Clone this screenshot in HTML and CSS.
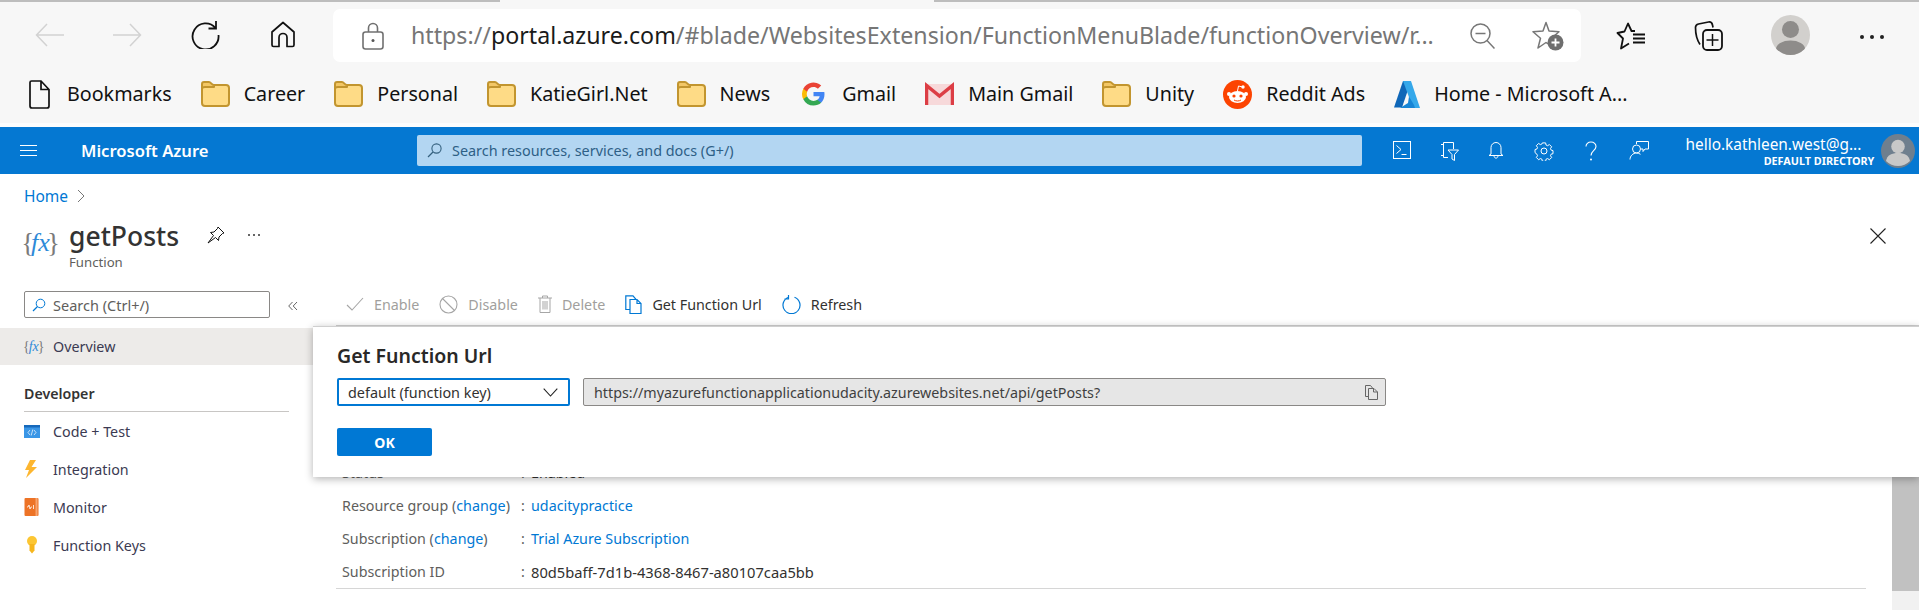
FILE: index.html
```html
<!DOCTYPE html>
<html lang="en">
<head>
    <meta charset="UTF-8">
    <title>getPosts - Microsoft Azure</title>
    <link rel="stylesheet" href="styles.css">
</head>
<body>
    <svg class="defs" width="0" height="0">
        <defs>
            <g id="folder-shape">
                <rect x="1" y="4" width="27" height="21" rx="3" fill="#fedb86" stroke="#c2952f" stroke-width="2"/>
                <path d="M1 8V3a2 2 0 0 1 2-2h5c2 0 2.500 3 5 3v2H4C2 6 1 7 1 8z" fill="#f3c766" stroke="#c2952f" stroke-width="2" stroke-linejoin="round"/>
            </g>
        </defs>
    </svg>

    <div class="browser">
        <div class="tabstrip">
            <span class="tab-shadow left"></span>
            <span class="tab-shadow right"></span>
        </div>
        <div class="toolbar">
            <svg class="back" width="29" height="24" viewBox="0 0 29 24"><path d="M29 12H1.500M12 1 1.500 12 12 23" fill="none" stroke="#d2d2d2" stroke-width="1.500"/></svg>
            <svg class="forward" width="29" height="24" viewBox="0 0 29 24"><path d="M0 12h27.500M17 1l10.500 11L17 23" fill="none" stroke="#d2d2d2" stroke-width="1.500"/></svg>
            <svg class="reload" width="29" height="29" viewBox="0 0 29 29"><path d="M24.500 8A13 13 0 1 0 27.500 15M25 1v7.500h-7.500" fill="none" stroke="#111" stroke-width="1.800"/></svg>
            <svg class="home" width="26" height="27" viewBox="0 0 26 27"><path d="M13 1.500 2 11v13a1.500 1.500 0 0 0 1.500 1.500H9V16.500a4 4 0 0 1 8 0v9h5.500A1.500 1.500 0 0 0 24 24V11z" fill="none" stroke="#111" stroke-width="1.700" stroke-linejoin="round"/></svg>
            <div class="addressbar">
                <svg class="lock" width="22" height="28" viewBox="0 0 22 28"><path d="M6.500 10V6a4.500 4.500 0 0 1 9 0v4" fill="none" stroke="#707070" stroke-width="1.600"/><rect x="1" y="10" width="20" height="17" rx="2.500" fill="none" stroke="#707070" stroke-width="1.600"/><circle cx="11" cy="18.500" r="1.500" fill="#555"/></svg>
                <span class="url"><span class="url-dim">https://</span>portal.azure.com<span class="url-dim">/#blade/WebsitesExtension/FunctionMenuBlade/functionOverview/r...</span></span>
                <svg class="zoom-out" width="25" height="26" viewBox="0 0 25 26"><circle cx="10.500" cy="10.500" r="9.500" fill="none" stroke="#777" stroke-width="1.500"/><path d="M5.500 10.500h10M17 17.500l7.500 8" fill="none" stroke="#777" stroke-width="1.500"/></svg>
                <svg class="star-add" width="32" height="30" viewBox="0 0 32 30"><path d="M14 1.500 17 10l10 .8-7.500 6.400L22 27l-8-5.500L6 27l2.500-9.800L1 10.800 11 10z" fill="none" stroke="#777" stroke-width="1.500" stroke-linejoin="round"/><circle cx="23.500" cy="21.500" r="8" fill="#6e6e6e"/><path d="M23.500 17.500v8M19.500 21.500h8" stroke="#fff" stroke-width="1.800"/></svg>
            </div>
            <svg class="fav" width="30" height="28" viewBox="0 0 30 28"><path d="M19 9h-3.500L12 1.500 8.500 9.500 1.500 11 7 16.500 5 26.500l8-5" fill="none" stroke="#111" stroke-width="1.800" stroke-linejoin="round"/><path d="M17 12.500h12M17 16.500h12M17 20.500h12" stroke="#111" stroke-width="1.800"/></svg>
            <svg class="collections" width="30" height="30" viewBox="0 0 30 30"><path d="M6 23.500C3 19 1.500 13 1.500 6.500c0-2 1-3 3-3.500l10-2c2-.3 3.500.5 4 3l.5 2.500" fill="none" stroke="#111" stroke-width="1.700"/><rect x="9" y="9" width="19" height="20" rx="4" fill="none" stroke="#111" stroke-width="1.800"/><path d="M18.500 13v12M12.500 19h12" stroke="#111" stroke-width="1.500"/></svg>
            <div class="browser-avatar">
                <svg width="39" height="40" viewBox="0 0 39 40"><circle cx="19.500" cy="14.500" r="8.500" fill="#8e8c8a"/><ellipse cx="19.500" cy="34" rx="14.500" ry="8.500" fill="#8e8c8a"/></svg>
            </div>
            <div class="more-dots"><i></i><i></i><i></i></div>
        </div>
        <div class="bookmarks">
            <div class="bookmark doc">
                <svg width="21" height="29" viewBox="0 0 21 29"><path d="M2.500 1H12l8 8.500V26a2 2 0 0 1-2 2H3a2 2 0 0 1-2-2V2.500A1.500 1.500 0 0 1 2.500 1zM12 1v8.500h8" fill="none" stroke="#111" stroke-width="1.700"/></svg>
                <span>Bookmarks</span>
            </div>
            <div class="bookmark"><svg width="29" height="26" viewBox="0 0 29 26"><use href="#folder-shape"/></svg><span>Career</span></div>
            <div class="bookmark"><svg width="29" height="26" viewBox="0 0 29 26"><use href="#folder-shape"/></svg><span>Personal</span></div>
            <div class="bookmark"><svg width="29" height="26" viewBox="0 0 29 26"><use href="#folder-shape"/></svg><span>KatieGirl.Net</span></div>
            <div class="bookmark"><svg width="29" height="26" viewBox="0 0 29 26"><use href="#folder-shape"/></svg><span>News</span></div>
            <div class="bookmark">
                <svg width="29" height="26" viewBox="-2.500 -1 29 26"><path d="M23 12.200c0-.8-.1-1.600-.2-2.300H12v4.400h6.200a5.300 5.300 0 0 1-2.300 3.500v2.900h3.700c2.200-2 3.400-5 3.400-8.500z" fill="#4285f4"/><path d="M12 23.500c3.100 0 5.700-1 7.600-2.800l-3.700-2.900c-1 .7-2.300 1.100-3.900 1.100-3 0-5.500-2-6.400-4.700H1.800v3A11.500 11.500 0 0 0 12 23.500z" fill="#34a853"/><path d="M5.600 14.200a6.900 6.900 0 0 1 0-4.400v-3H1.800a11.500 11.500 0 0 0 0 10.400z" fill="#fbbc05"/><path d="M12 5.100c1.700 0 3.200.6 4.400 1.700l3.300-3.300A11.500 11.500 0 0 0 1.800 6.800l3.800 3C6.500 7.100 9 5.100 12 5.100z" fill="#ea4335"/></svg>
                <span>Gmail</span>
            </div>
            <div class="bookmark">
                <svg width="29" height="26" viewBox="0 0 29 26"><rect y="3" width="29" height="21" fill="#f7d9da"/><path d="M1.500 24V4.500L14.500 15 27.500 4.500V24" fill="none" stroke="#dc3e45" stroke-width="3.500"/></svg>
                <span>Main Gmail</span>
            </div>
            <div class="bookmark"><svg width="29" height="26" viewBox="0 0 29 26"><use href="#folder-shape"/></svg><span>Unity</span></div>
            <div class="bookmark">
                <svg width="29" height="29" viewBox="0 0 29 29"><circle cx="14.500" cy="14.500" r="14.500" fill="#fc4301"/><ellipse cx="14.500" cy="17" rx="8.500" ry="6" fill="#fff"/><circle cx="6" cy="14" r="2" fill="#fff"/><circle cx="23" cy="14" r="2" fill="#fff"/><circle cx="11" cy="16" r="1.600" fill="#fc4301"/><circle cx="18" cy="16" r="1.600" fill="#fc4301"/><path d="M11 20c2 1.300 5 1.300 7 0" fill="none" stroke="#fc4301" stroke-width="1"/><path d="M14.500 11l1-5 4 1" fill="none" stroke="#fff" stroke-width="1"/><circle cx="20" cy="7" r="1.700" fill="#fff"/></svg>
                <span>Reddit Ads</span>
            </div>
            <div class="bookmark">
                <svg width="26" height="29" viewBox="0 0 26 29"><path d="M9 1h8L8 27.500H0z" fill="#0f67b8"/><path d="M17 1H9l10 27h7z" fill="#35a8ea"/><path d="M15 16.500l5 8.500 1 3H6l8-5z" fill="#1685d6"/></svg>
                <span>Home - Microsoft A...</span>
            </div>
        </div>
    </div>

    <header class="topbar">
        <div class="hamburger"><i></i><i></i><i></i></div>
        <div class="brand">Microsoft Azure</div>
        <div class="global-search">
            <svg width="15" height="15" viewBox="0 0 15 15"><circle cx="9.500" cy="5.500" r="4.600" fill="none" stroke="#35617f" stroke-width="1.100"/><path d="M6 9 1 14" stroke="#35617f" stroke-width="1.200"/></svg>
            <span>Search resources, services, and docs (G+/)</span>
        </div>
        <div class="top-icons">
            <div class="top-icon"><svg width="18" height="18" viewBox="0 0 18 18"><rect x=".5" y=".5" width="17" height="17" fill="none" stroke="#fff"/><path d="M3.500 4.500 8 8.500l-4.500 4M8.500 13.500h5" fill="none" stroke="#fff"/></svg></div>
            <div class="top-icon"><svg width="20" height="20" viewBox="0 0 20 20"><path d="M4.500 1.500h10V8M4.500 1.500v15H9M2 3.500h2.500M2 14.500h2.500M9 9h10.500l-4 4.500V19.500L13 18v-4.500z" fill="none" stroke="#fff"/></svg></div>
            <div class="top-icon"><svg width="16" height="19" viewBox="0 0 16 19"><path d="M8 1.500a5 5 0 0 0-5 5V13l-2 1.500h14L13 13V6.500a5 5 0 0 0-5-5zM6 14.500c0 3.500 4 3.500 4 0" fill="none" stroke="#fff"/></svg></div>
            <div class="top-icon"><svg width="20" height="20" viewBox="0 0 20 20"><path d="M8.200 1h3.600l.5 2.400 1.700.7 2-1.300 2.500 2.500-1.300 2 .7 1.700 2.100.6v3.400l-2.100.5-.7 1.700 1.300 2-2.500 2.500-2-1.300-1.700.7-.5 2.400H8.200l-.5-2.400-1.700-.7-2 1.300-2.500-2.500 1.300-2-.7-1.700L0 11.800V8.400l2.100-.6.700-1.700-1.300-2L4 1.600l2 1.300 1.700-.7z" transform="translate(1 1) scale(.9)" fill="none" stroke="#fff" stroke-width="1.100"/><circle cx="10" cy="10" r="3" fill="none" stroke="#fff"/></svg></div>
            <div class="top-icon"><svg width="12" height="20" viewBox="0 0 12 20"><path d="M1 5.500C1 3 3 1 6 1s5 2 5 4.500c0 4-5 4.500-5 9" fill="none" stroke="#fff" stroke-width="1.100"/><circle cx="6" cy="18.500" r="1" fill="#fff"/></svg></div>
            <div class="top-icon"><svg width="20" height="19" viewBox="0 0 20 19"><circle cx="7.500" cy="8" r="4" fill="none" stroke="#fff"/><path d="M1 18.500c0-3.500 3-6.500 6.500-6.500 1.500 0 3 .5 4 1.300M7.500 3V.5h12V8H16l-2 2.500V8h-2" fill="none" stroke="#fff"/></svg></div>
        </div>
        <div class="account">
            <div class="account-name">hello.kathleen.west@g...</div>
            <div class="account-dir">DEFAULT DIRECTORY</div>
        </div>
        <svg class="account-pic" width="34" height="34" viewBox="0 0 34 34"><circle cx="17" cy="17" r="17" fill="#6f7f8e"/><circle cx="17" cy="12.500" r="6.800" fill="#c8c8c8"/><path d="M5 27c1-6 6-8 12-8s11 2 12 8a17 17 0 0 1-24 0z" fill="#c8c8c8"/></svg>
    </header>

    <div class="crumbs">
        <a href="#">Home</a>
        <svg width="8" height="14" viewBox="0 0 8 14"><path d="M1 1l6 6-6 6" fill="none" stroke="#777"/></svg>
    </div>

    <div class="title-row">
        <div class="fx-big"><span class="brace">{</span><span class="fx">fx</span><span class="brace">}</span></div>
        <div class="title-text">
            <h1>getPosts</h1>
            <div class="subtitle">Function</div>
        </div>
        <svg class="pin" width="18" height="18" viewBox="0 0 18 18"><path d="M11 1l6 6-1.500.5L12 11l-.5 3.500-3-3L1 17l5.500-7.500-3-3L7 6l3.500-3.500z" fill="none" stroke="#111" stroke-linejoin="round"/></svg>
        <div class="title-dots"><i></i><i></i><i></i></div>
        <svg class="close" width="16" height="16" viewBox="0 0 16 16"><path d="M.5.500l15 15M15.500.5l-15 15" stroke="#222" stroke-width="1.100"/></svg>
    </div>

    <div class="blade">
        <aside class="sidebar">
            <div class="side-search-row">
                <div class="side-search">
                    <svg width="14" height="14" viewBox="0 0 14 14"><circle cx="8.500" cy="5.500" r="4.300" fill="none" stroke="#0078d4"/><path d="M5.500 8.500 1 13" stroke="#0078d4" stroke-width="1.200"/></svg>
                    <span>Search (Ctrl+/)</span>
                </div>
                <svg class="collapse" width="10" height="10" viewBox="0 0 10 10"><path d="M4.500 1 .7 5l3.800 4M9 1 5.200 5 9 9" fill="none" stroke="#666"/></svg>
            </div>
            <div class="side-item active">
                <div class="side-icon fx-small"><span class="brace">{</span><span class="fx">fx</span><span class="brace">}</span></div>
                Overview
            </div>
            <div class="side-group">Developer</div>
            <div class="side-item">
                <div class="side-icon"><svg width="16" height="13" viewBox="0 0 16 13"><rect width="16" height="13" fill="#3a96e6"/><rect width="16" height="2.500" fill="#1669bb"/><path d="M6 5 4 7.500 6 10M10 5l2 2.500L10 10M8.800 4.500 7.200 10.500" fill="none" stroke="#fff" stroke-width=".7"/></svg></div>
                Code + Test
            </div>
            <div class="side-item">
                <div class="side-icon"><svg width="14" height="18" viewBox="0 0 14 18"><path d="M6 0h6L7.500 7H13L2 18l3-8H1z" fill="#fdb62f"/></svg></div>
                Integration
            </div>
            <div class="side-item">
                <div class="side-icon"><svg width="15" height="18" viewBox="0 0 15 18"><rect x=".5" width="14" height="18" rx="1" fill="#ed7326"/><rect x="11.500" width="2" height="18" fill="#f7a46e"/><path d="M3 9h1l1-2 1 4 1-2h1M9.500 7v4" fill="none" stroke="#fff" stroke-width=".8"/></svg></div>
                Monitor
            </div>
            <div class="side-item">
                <div class="side-icon"><svg class="key" width="12" height="18" viewBox="0 0 12 18"><circle cx="6" cy="5" r="5" fill="#fcc633"/><path d="M3.500 8h5v6.500L6 17.500l-2.500-3z" fill="#f6b61d"/></svg></div>
                Function Keys
            </div>
        </aside>

        <main class="content">
            <div class="command-bar">
                <div class="cmd disabled">
                    <svg width="18" height="14" viewBox="0 0 18 14"><path d="M1 8l5 5L17 1" fill="none" stroke="#a6a6a6" stroke-width="1.100"/></svg>
                    Enable
                </div>
                <div class="cmd disabled">
                    <svg width="19" height="19" viewBox="0 0 19 19"><circle cx="9.500" cy="9.500" r="8.500" fill="none" stroke="#a6a6a6" stroke-width="1.100"/><path d="M3.500 3.500l12 12" stroke="#a6a6a6" stroke-width="1.100"/></svg>
                    Disable
                </div>
                <div class="cmd disabled">
                    <svg width="14" height="18" viewBox="0 0 14 18"><path d="M0 3h14M4.500 3V1h5v2M2 3v14.500h10V3M5 6v8.500M7 6v8.500M9 6v8.500" fill="none" stroke="#a6a6a6"/></svg>
                    Delete
                </div>
                <div class="cmd">
                    <svg width="17" height="19" viewBox="0 0 17 19"><path d="M5 14.500H.8V.8H8l3 3.500" fill="none" stroke="#0078d4" stroke-width="1.200"/><path d="M5 4.500h7l4 4v10H5zM12 4.500v4h4" fill="none" stroke="#0078d4" stroke-width="1.200"/></svg>
                    Get Function Url
                </div>
                <div class="cmd">
                    <svg width="19" height="19" viewBox="0 0 19 19"><path d="M12.500 2.200a8.500 8.500 0 1 1-6 0M6.500 0v4H2.500" fill="none" stroke="#0078d4" stroke-width="1.200"/></svg>
                    Refresh
                </div>
            </div>
            <div class="detail-area">
                <div class="details">
                    <div class="detail-row"><div class="detail-label">Status</div><div class="detail-colon">:</div><div>Enabled</div></div>
                    <div class="detail-row"><div class="detail-label">Resource group (<a href="#">change</a>)</div><div class="detail-colon">:</div><a href="#">udacitypractice</a></div>
                    <div class="detail-row"><div class="detail-label">Subscription (<a href="#">change</a>)</div><div class="detail-colon">:</div><a href="#">Trial Azure Subscription</a></div>
                    <div class="detail-row"><div class="detail-label">Subscription ID</div><div class="detail-colon">:</div><div class="detail-id">80d5baff-7d1b-4368-8467-a80107caa5bb</div></div>
                </div>
                <div class="scrollbar"><div class="scroll-thumb"></div></div>
            </div>
        </main>
    </div>

    <div class="url-popup">
        <h2>Get Function Url</h2>
        <div class="url-fields">
            <div class="key-select">
                <span>default (function key)</span>
                <svg width="15" height="9" viewBox="0 0 15 9"><path d="M.7.700 7.500 8 14.300.7" fill="none" stroke="#222" stroke-width="1.100"/></svg>
            </div>
            <div class="url-box">
                <span>https://myazurefunctionapplicationudacity.azurewebsites.net/api/getPosts?</span>
                <svg width="13" height="15" viewBox="0 0 13 15"><path d="M3.500 11.500H.5V.5h5l2 2.500" fill="none" stroke="#666"/><path d="M3.500 3.500h5.500l3.500 3.500v7.500h-9zM8.500 3.500V7h4" fill="none" stroke="#666"/></svg>
            </div>
        </div>
        <button class="ok-btn" type="button">OK</button>
    </div>
</body>
</html>
```

FILE: styles.css
```css
body {
    margin: 0;
    height: 610px;
    overflow: hidden;
    position: relative;
    display: flex;
    flex-direction: column;
    background-color: #ffffff;
    font-family: "Noto Sans", sans-serif;
    color: #333333;
}

a {
    color: #0078d4;
    text-decoration: none;
}

svg {
    display: block;
    flex-shrink: 0;
}

.defs {
    height: 0;
}

/* browser chrome */
.browser {
    height: 127px;
    flex-shrink: 0;
    box-sizing: border-box;
    background-color: #f7f7f7;
    border-bottom: 4px solid #fdfdfd;
}

.tabstrip {
    height: 2px;
    display: flex;
    justify-content: space-between;
}

.tab-shadow {
    height: 2px;
    background-color: #bdbdbd;
}

.tab-shadow.left {
    width: 500px;
}

.tab-shadow.right {
    width: 985px;
}

.toolbar {
    height: 60px;
    padding-top: 7px;
    display: flex;
    align-items: flex-start;
}

.back {
    margin: 14px 0 0 35px;
}

.forward {
    margin: 14px 0 0 49px;
}

.reload {
    margin: 11px 0 0 49px;
}

.home {
    margin: 12px 0 0 50px;
}

.addressbar {
    width: 1248px;
    height: 53px;
    margin-left: 37px;
    display: flex;
    align-items: center;
    border-radius: 7px;
    background-color: #ffffff;
}

.lock {
    margin-left: 29px;
}

.url {
    width: 1059px;
    margin: -2px 0 0 27px;
    font-size: 23.200px;
    color: #1a1a1a;
    white-space: nowrap;
}

.url-dim {
    color: #767676;
}

.star-add {
    margin-left: 37px;
}

.fav {
    margin: 13px 0 0 35px;
}

.collections {
    margin: 12px 0 0 48px;
}

.browser-avatar {
    width: 39px;
    height: 40px;
    margin: 6px 0 0 47px;
    overflow: hidden;
    border-radius: 50%;
    background-color: #d2d0cd;
}

.more-dots {
    margin: 26px 0 0 50px;
    display: flex;
    gap: 6px;
}

.more-dots i {
    width: 4px;
    height: 4px;
    border-radius: 50%;
    background-color: #222222;
}

.bookmarks {
    height: 50px;
    padding-left: 29px;
    display: flex;
    align-items: center;
    gap: 29px;
}

.bookmark {
    display: flex;
    align-items: center;
    gap: 14px;
    font-size: 19.700px;
    color: #111111;
    white-space: nowrap;
}

.bookmark span {
    margin-top: -1px;
}

.bookmark.doc {
    gap: 17px;
}

/* azure header */
.topbar {
    height: 47px;
    flex-shrink: 0;
    display: flex;
    align-items: center;
    background-color: #0578d2;
    color: #ffffff;
}

.hamburger {
    width: 17px;
    margin-left: 20px;
    display: flex;
    flex-direction: column;
    gap: 4px;
}

.hamburger i {
    height: 1px;
    background-color: #ffffff;
}

.brand {
    width: 336px;
    margin-left: 44px;
    font-size: 16.600px;
    font-weight: 600;
}

.global-search {
    width: 945px;
    height: 31px;
    box-sizing: border-box;
    padding-left: 10px;
    display: flex;
    align-items: center;
    gap: 10px;
    border-radius: 2px;
    background-color: #b3d6f2;
    color: #2e5f86;
    font-size: 14.400px;
}

.top-icons {
    margin-left: 16px;
    display: flex;
}

.top-icon {
    width: 47.400px;
    display: flex;
    justify-content: center;
}

.account {
    width: 212px;
    text-align: right;
}

.account-name {
    margin-right: 13px;
    font-size: 15.400px;
    line-height: 19px;
    white-space: nowrap;
}

.account-dir {
    font-size: 10.800px;
    font-weight: 700;
    line-height: 13px;
    white-space: nowrap;
}

.account-pic {
    margin-left: 7px;
}

/* page heading */
.crumbs {
    height: 44px;
    flex-shrink: 0;
    padding-left: 24px;
    display: flex;
    align-items: center;
    gap: 9px;
    font-size: 15.500px;
}

.title-row {
    height: 60px;
    flex-shrink: 0;
    display: flex;
    align-items: flex-start;
}

.fx-big {
    width: 33px;
    margin: 8px 0 0 24px;
    display: flex;
    justify-content: center;
    font-family: "Liberation Serif", serif;
    line-height: 34px;
}

.brace {
    color: #7a7a7a;
    font-weight: 400;
}

.fx {
    color: #2e8ad8;
    font-style: italic;
}

.fx-big .brace {
    margin: 0 -3px;
    font-size: 27px;
}

.fx-big .fx {
    font-size: 26px;
}

.title-text {
    margin-left: 12px;
}

h1 {
    margin: 0;
    font-size: 26.500px;
    font-weight: 500;
    line-height: 36px;
}

.subtitle {
    font-size: 13.200px;
    line-height: 16px;
    color: #605e5c;
}

.pin {
    margin: 8px 0 0 28px;
}

.title-dots {
    margin: 16px 0 0 23px;
    display: flex;
    gap: 3px;
}

.title-dots i {
    width: 2px;
    height: 2px;
    border-radius: 50%;
    background-color: #333333;
}

.close {
    margin: 10px 33px 0 auto;
}

/* blade */
.blade {
    flex: 1;
    display: flex;
    min-height: 0;
}

.sidebar {
    width: 313px;
    flex-shrink: 0;
}

.side-search-row {
    height: 37px;
    padding: 13px 0 0 24px;
    display: flex;
    align-items: flex-start;
}

.side-search {
    width: 246px;
    height: 27px;
    box-sizing: border-box;
    padding-left: 7px;
    display: flex;
    align-items: center;
    gap: 7px;
    border: 1px solid #8a8886;
    border-radius: 2px;
    font-size: 14.500px;
    color: #605e5c;
}

.collapse {
    margin: 10px 0 0 18px;
}

.side-item {
    height: 38px;
    padding-left: 24px;
    display: flex;
    align-items: center;
    font-size: 14.300px;
    color: #3b3a52;
}

.side-item.active {
    height: 37px;
    background-color: #edebe9;
}

.side-icon {
    width: 29px;
    display: flex;
}

.key {
    margin-left: 2px;
}

.fx-small {
    font-family: "Liberation Serif", serif;
    font-size: 14px;
}

.fx-small .brace {
    margin: 0 -1px;
}

.side-group {
    height: 20px;
    margin: 19px 24px 0;
    padding-bottom: 7px;
    border-bottom: 1px solid #c8c6c4;
    font-size: 14.200px;
    font-weight: 600;
    line-height: 20px;
}

.content {
    flex: 1;
    min-width: 0;
    display: flex;
    flex-direction: column;
}

.command-bar {
    height: 48px;
    flex-shrink: 0;
    box-sizing: border-box;
    margin-left: 23px;
    padding: 5px 0 0 10px;
    display: flex;
    align-items: center;
    gap: 20px;
    border-bottom: 1px solid #d0d0d0;
    font-size: 14.300px;
}

.cmd {
    display: flex;
    align-items: center;
    gap: 10px;
    color: #323130;
}

.cmd.disabled {
    color: #a19f9d;
}

.detail-area {
    flex: 1;
    display: flex;
    min-height: 0;
}

.details {
    flex: 1;
    align-self: flex-start;
    margin: 0 26px 0 23px;
    padding: 130px 0 0 6px;
    border-bottom: 1px solid #d6d6d6;
    font-size: 14.300px;
    color: #323130;
}

.detail-row {
    height: 33px;
    display: flex;
    align-items: center;
}

.detail-label {
    width: 179px;
    color: #605e5c;
}

.detail-colon {
    width: 10px;
    color: #605e5c;
}

.detail-id {
    font-size: 14.700px;
}

.scrollbar {
    width: 27px;
    flex-shrink: 0;
    background-color: #f1f1f1;
}

.scroll-thumb {
    height: 265px;
    background-color: #c1c1c1;
}

/* get function url popup */
.url-popup {
    position: absolute;
    top: 326px;
    left: 313px;
    right: 0;
    height: 151px;
    box-sizing: border-box;
    padding: 17px 24px 0;
    background-color: #ffffff;
    border-top: 1px solid #cfcfcf;
    box-shadow: 0 2px 8px rgba(0, 0, 0, 0.3);
}

h2 {
    margin: 0;
    font-size: 19.500px;
    font-weight: 600;
    line-height: 24px;
    color: #292827;
}

.url-fields {
    margin-top: 10px;
    display: flex;
    gap: 13px;
}

.key-select {
    width: 233px;
    height: 28px;
    box-sizing: border-box;
    padding: 0 10px 0 9px;
    display: flex;
    align-items: center;
    justify-content: space-between;
    border: 2px solid #0078d4;
    border-radius: 2px;
    font-size: 14.400px;
    color: #323130;
}

.url-box {
    width: 803px;
    height: 28px;
    box-sizing: border-box;
    padding: 0 7px 0 10px;
    display: flex;
    align-items: center;
    justify-content: space-between;
    border: 1px solid #8a8886;
    border-radius: 2px;
    background-color: #e6e6e6;
    font-size: 14.300px;
    color: #3f3f3f;
}

.ok-btn {
    display: block;
    width: 95px;
    height: 28px;
    margin-top: 22px;
    padding: 0;
    border: none;
    border-radius: 2px;
    background-color: #0078d4;
    color: #ffffff;
    font-family: inherit;
    font-size: 14px;
    font-weight: 700;
}
```
